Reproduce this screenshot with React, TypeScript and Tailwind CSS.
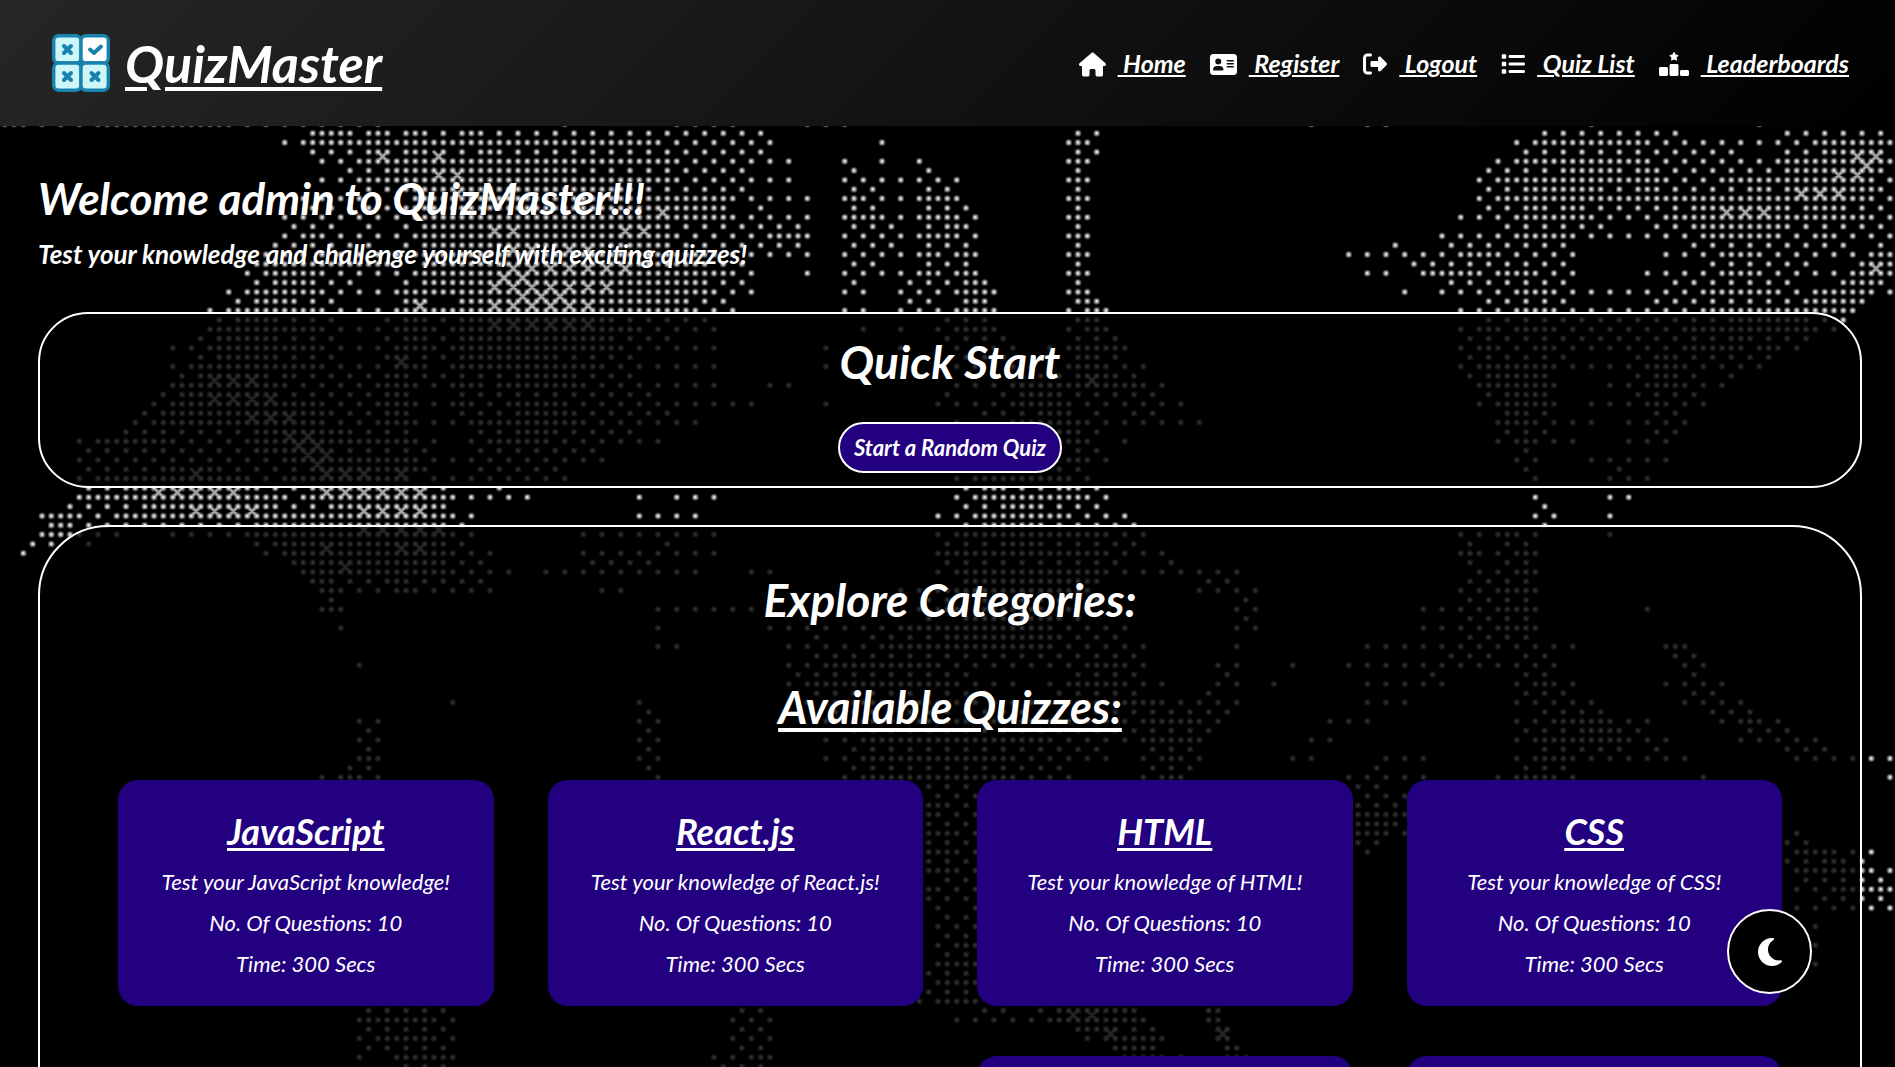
import React from "react";
import {
  FaHouse,
  FaAddressCard,
  FaRightFromBracket,
  FaList,
  FaRankingStar,
  FaMoon,
} from "react-icons/fa6";

/* Dot map of the backdrop, one string per row.
   "a-b" places a dot in every second column, "a=b" in every column. */
const FIRST_ROW = -1;
const ROWS: string[] = [
  "0=2 4-8 10=24 26-40 60 72-78 86-90 140 146-148 170 188",
  "33=37 39=41 43=45 47 49=51 53-81 115 117 165-179 191-201",
  "30 32=70 72-82 94 114=116 162 164=176 178-192 194=202",
  "33-37 39=41 43=45 47 49 51=53 55-81 115 117 163-185 191-193 195=201",
  "34-36 38=72 74-84 90 94 98 114=116 160 162=176 178-188 190=202",
  "37-39 41=61 63-79 91 99 115 159-165 167=173 175=177 179-189 191=201",
  "34-36 38=72 74-84 90-96 98-102 114=116 158 160=178 180-182 184=200 202",
  "39-41 43=67 69-79 91-93 99-101 115 159-161 163=171 173 175=177 179-185 187=189 191=201",
  "32-42 44=78 80-86 90=92 94-96 98=102 114=116 158 160=200 202",
  "31-41 43=77 81 91-93 99-103 115 159-161 163=165 167=169 171-179 181=191 193=197 199-201",
  "30-42 44=78 80-86 90=94 96 98=102 104 114=116 156-160 162=170 172-176 178=200 202",
  "31-35 39 43 45=71 73-79 81-85 91-95 99 101=103 115 161-171 177-179 181=191 193-201",
  "30 32=34 36-42 44=72 74-80 82=86 90-96 98=102 104 114=116 154-160 162=168 170-180 182=190 192 194=196 198-202",
  "29-39 43 45=71 73-85 91-95 99-103 115 149 155-167 181-197 201",
  "28-42 44=76 78-86 90-96 98=100 102=104 114=116 144-154 156=160 162-168 178-182 184=188 190-198 200=202",
  "27=41 45=75 77-79 91-93 99-103 115 151-167 183-193 199=202",
  "26 28=34 36-42 44=78 80 86 90-96 98=100 102=104 114=116 146-148 152=158 160=164 166-168 176-182 184=188 190-196 198=202",
  "27 29=33 35-37 43 45=75 77-79 91 97-101 103=105 115 155-167 179-191 197=201",
  "24 26=34 36-40 42=76 78-80 90-92 96-100 102=106 114=116 150 154-160 162=166 168-180 182=190 192 194=200 202",
  "25 27=31 33-35 43=45 49=73 75-77 97-99 103=105 115=117 159-167 177-191 193=199",
  "22 24=34 36-40 42=74 76-78 90-92 96-100 102=106 114 116=118 156-160 162=166 168-180 182=198",
  "23 25=29 31-35 41 43=45 47 49=65 67-75 101-105 115=117 159-183 185=193 195-197",
  "22 23=34 36-40 42=46 48=68 70-76 92 96 100 102=106 114 116=118 156 158=160 162=166 168-178 180=194 196",
  "21 23=29 31-35 41 43=45 47 49=65 67-71 101-107 115-119 157-183 185=187 189-193",
  "18-20 22=34 36-40 42=46 48=66 68-76 88 96 102-108 112 114=120 156 158=160 162-164 165=166 168-178 180=186 188=190 192",
  "21 23=29 31-35 41=43 45 47 49=59 61-67 103-107 115=117 119 157-167 175 177=179 181-189",
  "18 20=34 36-40 42=45 48=64 66-76 88 102-106 108-112 114=118 120-122 156 158=166 168-174 176=180 182-188",
  "19 21=28 30=31 33-39 41=43 45 47 49-53 55=61 63-67 109-113 115=119 121 157 159=165 175 177=179 181 185",
  "18=30 32-40 41=44 46 48=51 53=62 64-76 82-84 102-106 108=122 124 158=166 172-174 176=180 182-184",
  "17 19=29 31-39 41=43 49-69 101 107 109=113 115-123 159 161=165 175-181",
  "16 18=34 36-38 40=44 46 48=50 52 54=60 62-80 88 100-106 108=114 116-126 158 160=166 170-174 176=178 180-182",
  "15 17=35 37-39 41=43 49-53 55=61 63-71 105-109 111=114 117 121-123 161=163 165 177-179",
  "14 16=34 36-38 40=44 46-48 50=62 64-74 102 108=116 118-128 160=164 166-170 174-180",
  "13-25 27=37 39-43 51-53 55=59 61-67 113=115 117 161-165 177-179",
  "8 10=18 20-24 26=44 46 50 52=58 60-70 113=116 120 160 162=164 166-168 174-178",
  "9-25 27=35 37-39 41-45 51-63 115-117 163",
  "8-26 28 30=44 46-48 50-64 114=116 118 162-164 170-178",
  "9-15 17=19 21=23 25-31 33=45 51-59 113-115 163 173",
  "8 10=26 28 30=43 46-60 102 104=114 116 164 172-176",
  "9-11 13=15 16=27 29-31 33=45 47 53 103 105=107 109-111 113=115 117",
  "8=30 32=48 50-56 68 72-76 102 104=116 118 164 172-174",
  "7-13 15=29 31-33 35=47 103-105 107=111 113-117 165",
  "4=8 10 12=48 50 68-74 100-102 104=114 116-120 164-166 172",
  "5=7 9-25 27=47 49 103 105=111 113-121 165",
  "4=7 8-12 18-24 26=48 50 62-76 100 102=118 120-122 156-158 160=162 164 172",
  "3-5 9 27 29=47 49 71 101-105 107=111 113-121 157 161-163",
  "2 28 30=48 50-52 62-76 100=118 120-124 156=158 160 162=164",
  "31=47 49-51 63-69 101-119 125 157 161-163",
  "32=48 50-54 58-74 80-82 100 102=118 120-132 158-160 162=164",
  "33=35 37-41 42=43 45-51 103=117 129-131 157-163",
  "34=36 38-40 42=44 46-52 64-66 96-98 100=116 128-134 156-158 160=164",
  "35 99-117 133 157-163",
  "34=36 70-82 98 100=116 132-134 152-158 160=164 176",
  "99 103=113 115 133 157-163",
  "36 70 82-94 96=112 114-120 132-134 152-158 160=164",
  "87 93-99 101=113 115-119 157-163",
  "70-72 84-92 94=112 114-122 132 146-162 164-168 178=180",
  "87-121 155-159 163-165 179-181",
  "38 84-86 88=100 102-114 116=120 122 130-132 138 144-162 164-166 180-182",
  "85-103 115-121 131 153 163-165 181",
  "84 86=102 104-108 112 114=120 122-124 130-132 136 146-154 162 164=166 168 178-184",
  "87-105 113-121 129 163-167 181-183",
  "48 68 84-86 88=102 104-112 114=124 126-132 146-150 162-170 180-186",
  "69 89-119 121-131 165-171 183-187",
  "38-40 68-70 88=118 120 122=128 130 142-146 162-164 166=172 174-176 184 186=188 190",
  "39 69 91-119 121-129 163-167 169=173 175 187-191",
  "38-40 68-70 88-90 92=112 114-120 122=128 140-142 162-164 165=174 176-178 186-194",
  "39 69 91-117 123-127 165-173 177 191-195",
  "38=40 68-70 88-90 92=108 110-118 122 124=126 128 138-140 148-152 162 164=168 170-180 192-202",
  "37-39 69 91-97 99-113 123-127 147 163-167",
  "34 36=38 40 70 90 92=108 110-114 122 124=126 144-152 160 162=166 168 182 202",
  "99-103 145-147",
  "100-104 146-150",
  "99=100 101-103 145-149",
  "99=100 102-104 145=150",
  "99-103 145=149",
  "99=102 104 145=148 150 192",
  "99-103 145-147 191-193",
  "99=102 104 146 192=196 198-200",
  "99-103 191-193 195=197 199",
  "99=102 104 192=199 200-202",
  "101-103 193-201",
  "99=100 102-104 192-194 196=198 199=202",
  "99-103 195-201",
  "100 104 192-202",
  "101-103",
  "100-104 194",
  "101-103",
  "100-102 103=104 194",
  "101-103",
  "100=104 194",
  "99-103",
  "100=104",
  "99-103",
  "98-100 101=104",
  "39-47 79-81 105-107 111 113=121 129=130",
  "38 39=46 48 78-82 102-110 112=122 129=130",
  "39-47 79-81 115=119 121-123 130=131",
  "38 40=46 48 78-82 116 118=124 130=131",
  "39-47 79-81 119=123 131=132",
  "38 42=48 76-80 81=82 120=124 126 131=133",
  "43-47 77-81 121-125",
];

/* Bright crossings that sit between four neighbouring dots: row, then columns. */
const CROSSES: [number, number[]][] = [
  [2, [40, 46, 198, 200]],
  [3, [199]],
  [4, [46, 48, 196, 198]],
  [6, [48, 192, 194, 196]],
  [8, [70, 184, 186, 188]],
  [10, [52, 54, 66, 68]],
  [12, [54, 56, 60, 62]],
  [14, [54, 56, 58, 60, 62, 64, 66, 200]],
  [15, [53, 55]],
  [16, [52, 54, 56, 58, 60, 62, 64]],
  [17, [55, 57, 59]],
  [18, [44, 52, 54, 56, 58, 60, 62]],
  [20, [52, 54, 56, 58, 60, 62]],
  [24, [42]],
  [26, [22, 24, 26, 116]],
  [28, [22, 24, 26, 28]],
  [30, [26, 28, 30]],
  [32, [30, 32]],
  [33, [31, 33]],
  [34, [32, 34]],
  [35, [33]],
  [36, [20, 34, 36, 38, 42]],
  [38, [16, 18, 20, 22, 24, 34, 36, 38, 40, 42, 44]],
  [40, [20, 22, 24, 26, 38, 40, 42, 44]],
  [42, [38, 40, 42, 44, 46]],
  [44, [34, 42, 44]],
  [46, [36]],
  [94, [114, 116]],
  [96, [118, 130]],
];

const PITCH = 28 / 3;
const colX = (c: number) => (4.67 + c * PITCH).toFixed(1);
const rowY = (r: number) => (133.2 + r * PITCH).toFixed(1);

const dotPath = ROWS.map((row, i) =>
  row
    .split(" ")
    .map((run) => {
      const step = run.includes("=") ? 1 : 2;
      const [from, to] = run.split(/[-=]/).map(Number);
      let d = "";
      for (let c = from; c <= (to ?? from); c += step) {
        d += `M${colX(c)} ${rowY(i + FIRST_ROW)}h0`;
      }
      return d;
    })
    .join("")
).join("");

const crossPath = CROSSES.map(([r, cols]) =>
  cols
    .map(
      (c) =>
        `M${colX(c)} ${rowY(r)}L${colX(c + 1)} ${rowY(r + 1)}M${colX(c + 1)} ${rowY(r)}L${colX(c)} ${rowY(r + 1)}`
    )
    .join("")
).join("");

function Backdrop() {
  return (
    <svg
      className="absolute inset-0 h-full w-full"
      viewBox="0 0 1895 1067"
      preserveAspectRatio="xMidYMid slice"
      fill="none"
      strokeLinecap="round"
      aria-hidden="true"
    >
      <path d={dotPath} stroke="#3c3a3c" strokeWidth="7" />
      <path d={crossPath} stroke="#5c5c5c" strokeWidth="4" />
      <path d={dotPath} stroke="#8c8a8c" strokeWidth="5" />
      <path d={crossPath} stroke="#a8a8a8" strokeWidth="2" />
      <path d={dotPath} stroke="#e6e6e6" strokeWidth="2.5" />
    </svg>
  );
}

function Logo() {
  return (
    <svg className="size-[58px]" viewBox="0 0 58 58" aria-hidden="true">
      <g fill="#ccf6f8" stroke="#1983ae" strokeWidth="3.4">
        <rect x="1.7" y="1.7" width="27.3" height="27.3" rx="5" />
        <rect x="29" y="1.7" width="27.3" height="27.3" rx="5" fill="#fff" />
        <rect x="1.7" y="29" width="27.3" height="27.3" rx="5" />
        <rect x="29" y="29" width="27.3" height="27.3" rx="5" />
      </g>
      <g fill="none" stroke="#1983ae" strokeWidth="4" strokeLinecap="round" strokeLinejoin="round">
        <path d="m12 12 7 7m0-7-7 7" />
        <path d="m12 39 7 7m0-7-7 7" />
        <path d="m39.500 39 7 7m0-7-7 7" />
        <path d="m38 15.500 4 3.500 7-6.500" />
      </g>
    </svg>
  );
}

const NAV = [
  { label: "Home", Icon: FaHouse, size: "size-[27px]" },
  { label: "Register", Icon: FaAddressCard, size: "size-[27px]" },
  { label: "Logout", Icon: FaRightFromBracket, size: "size-6" },
  { label: "Quiz List", Icon: FaList, size: "size-6" },
  { label: "Leaderboards", Icon: FaRankingStar, size: "size-[30px]" },
];

const QUIZZES = [
  { title: "JavaScript", text: "Test your JavaScript knowledge!" },
  { title: "React.js", text: "Test your knowledge of React.js!" },
  { title: "HTML", text: "Test your knowledge of HTML!" },
  { title: "CSS", text: "Test your knowledge of CSS!" },
];

export default function App() {
  return (
    <div className="relative h-screen overflow-hidden bg-black font-['Lato','Open_Sans',sans-serif] text-white italic">
      <Backdrop />
      <div className="relative h-full overflow-y-auto [scrollbar-width:none]">
        <header className="flex h-[126px] items-center justify-between bg-[linear-gradient(135deg,#262626,#000)] pr-[46px] pl-[52px]">
          <a href="#home" className="flex items-center gap-[15px]">
            <Logo />
            <span className="text-[52px] leading-[60px] font-bold underline decoration-4 underline-offset-4">
              QuizMaster
            </span>
          </a>
          <nav className="flex items-center gap-6 pt-0.5">
            {NAV.map(({ label, Icon, size }) => (
              <a key={label} href="#" className="flex items-center gap-3 text-[25px] font-bold">
                <Icon className={size} />
                <span className="whitespace-pre underline decoration-2 underline-offset-2">
                  {" " + label}
                </span>
              </a>
            ))}
          </nav>
        </header>

        <main className="mr-[33px] ml-[38px]">
          <section className="pt-[44px]">
            <h1 className="text-[44px] leading-[56px] font-bold">Welcome admin to QuizMaster!!!</h1>
            <p className="text-[26px] leading-[56px] font-bold">
              Test your knowledge and challenge yourself with exciting quizzes!
            </p>
          </section>

          <section className="mt-[30px] flex h-[176px] flex-col items-center rounded-[50px] border-2 border-white bg-black/78 pt-[20px]">
            <h2 className="text-[46px] leading-[56px] font-bold">Quick Start</h2>
            <button
              type="button"
              className="mt-[32px] h-[51px] rounded-[26px] border-2 border-white bg-[#220080] px-[14px] text-[22px] font-bold whitespace-nowrap italic"
            >
              Start a Random Quiz
            </button>
          </section>

          <section className="mt-[37px] mb-10 rounded-[70px] border-2 border-white bg-black/78 px-[78px] pt-[45px] pb-16 text-center">
            <h2 className="text-[46px] leading-[56px] font-bold">Explore Categories:</h2>
            <h2 className="mt-[51px] text-[45px] leading-[56px] font-bold underline decoration-4 underline-offset-4">
              Available Quizzes:
            </h2>
            <div className="mt-[45px] grid grid-cols-4 gap-x-[54px] gap-y-[50px]">
              {QUIZZES.map(({ title, text }) => (
                <article key={title} className="h-[226px] rounded-[20px] bg-[#220080] pt-[27px]">
                  <h3 className="text-[36px] leading-[48px] font-bold underline decoration-3 underline-offset-3">
                    <a href="#">{title}</a>
                  </h3>
                  <p className="mt-[6px] text-[22px] leading-[41px]">{text}</p>
                  <p className="text-[22px] leading-[41px]">No. Of Questions: 10</p>
                  <p className="text-[22px] leading-[41px]">Time: 300 Secs</p>
                </article>
              ))}
              <article className="col-start-3 h-[226px] rounded-[20px] bg-[#220080]" />
              <article className="h-[226px] rounded-[20px] bg-[#220080]" />
            </div>
          </section>
        </main>
      </div>
      <button
        type="button"
        aria-label="Toggle theme"
        className="fixed right-[83px] bottom-[73px] flex size-[85px] items-center justify-center rounded-full border-2 border-white bg-black"
      >
        <FaMoon className="size-8" />
      </button>
    </div>
  );
}
